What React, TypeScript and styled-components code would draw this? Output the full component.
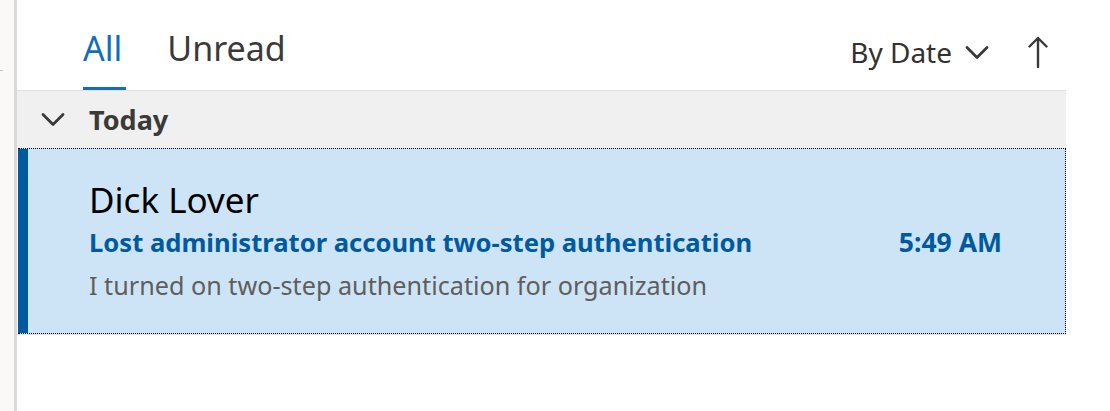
import React from 'react';
import styled, { createGlobalStyle } from 'styled-components';

const GlobalStyle = createGlobalStyle`
  html, body {
    margin: 0;
    padding: 0;
    background: #ffffff;
  }
  body {
    font-family: 'Noto Sans', 'Open Sans', sans-serif;
  }
`;

// Layout shell
const Shell = styled.div`
  display: flex;
  height: 411px;
  overflow: hidden;
`;

const LeftRail = styled.div`
  position: relative;
  width: 14px;
  flex-shrink: 0;
  background-color: #faf9f8;
  border-right: 3px solid #d9d9d9;

  &::after {
    content: '';
    position: absolute;
    left: 0;
    top: 70px;
    width: 3px;
    height: 1px;
    background: #c8c8c8;
  }
`;

const Main = styled.div`
  flex: 1;
  display: flex;
  flex-direction: column;
  padding-right: 44px;
`;

// Top bar with tabs and sort
const TopBar = styled.div`
  height: 90px;
  display: flex;
  align-items: stretch;
  justify-content: space-between;
  padding-left: 66px;
  box-sizing: border-box;
`;

const Tabs = styled.div`
  display: flex;
  gap: 41px;
`;

const Tab = styled.button<{ $active: boolean }>`
  display: flex;
  align-items: center;
  background: none;
  border: none;
  padding: 8px 4px 0 0;
  margin: 0;
  font-family: 'Noto Sans', sans-serif;
  font-size: 34px;
  color: ${props => (props.$active ? '#106ebe' : '#3b3a39')};
  border-bottom: 3px solid ${props => (props.$active ? '#106ebe' : 'transparent')};
  cursor: pointer;
`;

const SortGroup = styled.div`
  display: flex;
  align-items: center;
  padding-top: 14px;
  padding-right: 18px;
`;

const SortButton = styled.button`
  display: flex;
  align-items: center;
  gap: 13px;
  background: none;
  border: none;
  padding: 0;
  font-family: 'Noto Sans', sans-serif;
  font-size: 28px;
  color: #323130;
  cursor: pointer;
`;

const ArrowButton = styled.button`
  display: flex;
  align-items: center;
  background: none;
  border: none;
  padding: 0;
  margin-left: 39px;
  color: #3b3a39;
  cursor: pointer;
`;

// Group header
const GroupHeader = styled.div`
  height: 58px;
  box-sizing: border-box;
  display: flex;
  align-items: center;
  gap: 24px;
  padding-left: 24px;
  background-color: #f0f0f0;
  border-top: 1px solid #e1e1e1;
`;

const GroupTitle = styled.span`
  font-family: 'Noto Sans', sans-serif;
  font-weight: 700;
  font-size: 27px;
  color: #3b3a39;
`;

// Message item
const MessageItem = styled.div<{ $selected: boolean }>`
  height: 186px;
  box-sizing: border-box;
  display: flex;
  background-color: ${props => (props.$selected ? '#cde4f7' : '#ffffff')};
  border: 1px dotted ${props => (props.$selected ? '#000000' : 'transparent')};
  border-left: none;
  margin-left: 1px;
`;

const SelectBar = styled.div<{ $selected: boolean }>`
  width: 10px;
  flex-shrink: 0;
  background-color: ${props => (props.$selected ? '#005a9e' : 'transparent')};
`;

const MessageBody = styled.div`
  flex: 1;
  display: flex;
  flex-direction: column;
  padding: 29px 63px 0 61px;
`;

const Sender = styled.div`
  font-family: 'Noto Sans', sans-serif;
  font-size: 35px;
  line-height: 43px;
  color: #000000;
`;

const SubjectRow = styled.div`
  display: flex;
  justify-content: space-between;
  align-items: baseline;
`;

const Subject = styled.span`
  font-family: 'Noto Sans', sans-serif;
  font-weight: 700;
  font-size: 25.6px;
  line-height: 42px;
  color: #005a9e;
`;

const Time = styled(Subject)`
  font-size: 26.5px;
`;

const Preview = styled.div`
  font-family: 'Noto Sans', sans-serif;
  font-size: 25.2px;
  line-height: 43px;
  color: #605e5c;
`;

const Divider = styled.div`
  height: 1px;
  background: #e1e1e1;
`;

const Chevron = ({ color }: { color: string }) => (
  <svg width="24" height="15" viewBox="0 0 24 15" fill="none">
    <path d="M2 2.5 L12 12.5 L22 2.5" stroke={color} strokeWidth="2.8" strokeLinecap="round" strokeLinejoin="round" />
  </svg>
);

const UpArrow = () => (
  <svg width="20" height="32" viewBox="0 0 20 32" fill="none">
    <path d="M10 31 V2 M1.5 10.5 L10 2 L18.5 10.5" stroke="#3b3a39" strokeWidth="2.4" strokeLinecap="round" strokeLinejoin="round" />
  </svg>
);

const App: React.FC = () => {
  return (
    <>
      <GlobalStyle />
      <Shell>
        <LeftRail />
        <Main>
          <TopBar>
            <Tabs>
              <Tab $active>All</Tab>
              <Tab $active={false}>Unread</Tab>
            </Tabs>
            <SortGroup>
              <SortButton>
                By Date
                <Chevron color="#3b3a39" />
              </SortButton>
              <ArrowButton>
                <UpArrow />
              </ArrowButton>
            </SortGroup>
          </TopBar>

          <GroupHeader>
            <Chevron color="#3b3a39" />
            <GroupTitle>Today</GroupTitle>
          </GroupHeader>

          <MessageItem $selected>
            <SelectBar $selected />
            <MessageBody>
              <Sender>Dick Lover</Sender>
              <SubjectRow>
                <Subject>Lost administrator account two-step authentication</Subject>
                <Time>5:49 AM</Time>
              </SubjectRow>
              <Preview>I turned on two-step authentication for organization</Preview>
            </MessageBody>
          </MessageItem>
          <Divider />
        </Main>
      </Shell>
    </>
  );
};

export default App;
